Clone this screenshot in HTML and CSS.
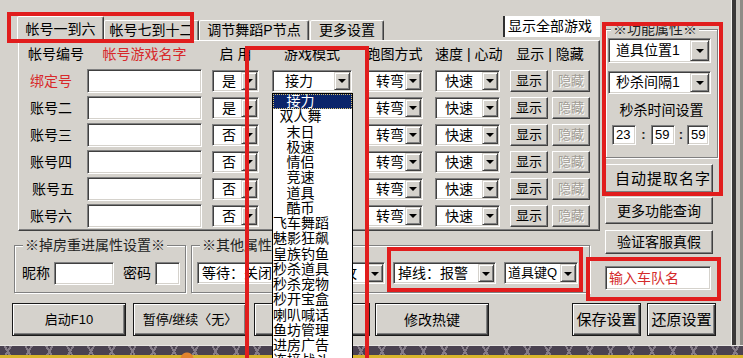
FILE: index.html
```html
<!DOCTYPE html>
<html lang="zh-CN">
<head>
<meta charset="utf-8">
<title>帐号设置</title>
<link rel="stylesheet" href="styles.css">
</head>
<body>
<div class="window">
  <div class="main">
    <div class="content">
      <div class="upper">
        <div class="left">
          <div class="tabs">
            <div class="tab active">帐号一到六</div>
            <div class="tab t2">帐号七到十二</div>
            <div class="tab t3">调节舞蹈P节点</div>
            <div class="tab t4">更多设置</div>
            <div class="showall">显示全部游戏</div>
          </div>
          <div class="panel">
            <div class="row head">
              <div class="c-label hl">帐号编号</div>
              <div class="c-name red">帐号游戏名字</div>
              <div class="c-en">启 用</div>
              <div class="c-mode">游戏模式</div>
              <div class="c-run">跑图方式</div>
              <div class="c-speed">速度 | 心动</div>
              <div class="c-sh">显示 | 隐藏</div>
            </div>
            <div class="row">
              <div class="c-label red">绑定号</div>
              <div class="c-name field"></div>
              <div class="c-en combo"><span class="cv">是</span><i class="cb"></i></div>
              <div class="c-mode combo"><span class="cv">接力</span><i class="cb"></i></div>
              <div class="c-run combo"><span class="cv">转弯</span><i class="cb"></i></div>
              <div class="c-speed combo"><span class="cv">快速</span><i class="cb"></i></div>
              <div class="c-show btn">显示</div>
              <div class="c-hide btn off">隐藏</div>
            </div>
            <div class="row">
              <div class="c-label">账号二</div>
              <div class="c-name field"></div>
              <div class="c-en combo"><span class="cv">是</span><i class="cb"></i></div>
              <div class="c-mode combo"><span class="cv">接力</span><i class="cb"></i></div>
              <div class="c-run combo"><span class="cv">转弯</span><i class="cb"></i></div>
              <div class="c-speed combo"><span class="cv">快速</span><i class="cb"></i></div>
              <div class="c-show btn">显示</div>
              <div class="c-hide btn off">隐藏</div>
            </div>
            <div class="row">
              <div class="c-label">账号三</div>
              <div class="c-name field"></div>
              <div class="c-en combo"><span class="cv">否</span><i class="cb"></i></div>
              <div class="c-mode combo"><span class="cv">接力</span><i class="cb"></i></div>
              <div class="c-run combo"><span class="cv">转弯</span><i class="cb"></i></div>
              <div class="c-speed combo"><span class="cv">快速</span><i class="cb"></i></div>
              <div class="c-show btn">显示</div>
              <div class="c-hide btn off">隐藏</div>
            </div>
            <div class="row">
              <div class="c-label">账号四</div>
              <div class="c-name field"></div>
              <div class="c-en combo"><span class="cv">否</span><i class="cb"></i></div>
              <div class="c-mode combo"><span class="cv">接力</span><i class="cb"></i></div>
              <div class="c-run combo"><span class="cv">转弯</span><i class="cb"></i></div>
              <div class="c-speed combo"><span class="cv">快速</span><i class="cb"></i></div>
              <div class="c-show btn">显示</div>
              <div class="c-hide btn off">隐藏</div>
            </div>
            <div class="row">
              <div class="c-label l5">账号五</div>
              <div class="c-name field"></div>
              <div class="c-en combo"><span class="cv">否</span><i class="cb"></i></div>
              <div class="c-mode combo"><span class="cv">接力</span><i class="cb"></i></div>
              <div class="c-run combo"><span class="cv">转弯</span><i class="cb"></i></div>
              <div class="c-speed combo"><span class="cv">快速</span><i class="cb"></i></div>
              <div class="c-show btn">显示</div>
              <div class="c-hide btn off">隐藏</div>
            </div>
            <div class="row">
              <div class="c-label">账号六</div>
              <div class="c-name field"></div>
              <div class="c-en combo"><span class="cv">否</span><i class="cb"></i></div>
              <div class="c-mode combo"><span class="cv">接力</span><i class="cb"></i></div>
              <div class="c-run combo"><span class="cv">转弯</span><i class="cb"></i></div>
              <div class="c-speed combo"><span class="cv">快速</span><i class="cb"></i></div>
              <div class="c-show btn">显示</div>
              <div class="c-hide btn off">隐藏</div>
            </div>
          </div>
          <div class="groups">
            <div class="gbox g1">
              <div class="gtitle"><span>※掉房重进属性设置※</span></div>
              <div class="grow">
                <span class="lbl">昵称</span>
                <div class="field nick"></div>
                <span class="lbl pw">密码</span>
                <div class="field pwd"></div>
              </div>
            </div>
            <div class="gbox g2">
              <div class="gtitle"><span>※其他属性设置※</span></div>
              <div class="grow">
                <div class="combo wait"><span class="cv">等待：关闭</span><i class="cb"></i></div>
                <div class="combo atk"><span class="cv">自动反攻</span><i class="cb"></i></div>
                <div class="combo drop"><span class="cv">掉线：报警</span><i class="cb"></i></div>
                <div class="combo key"><span class="cv">道具键Q</span><i class="cb"></i></div>
              </div>
            </div>
          </div>
        </div>
        <div class="right">
          <div class="gbox g3">
            <div class="gtitle"><span>※功能属性※</span></div>
            <div class="combo big c1"><span class="cv">道具位置1</span><i class="cb"></i></div>
            <div class="combo big c2"><span class="cv">秒杀间隔1</span><i class="cb"></i></div>
            <div class="timelbl">秒杀时间设置</div>
            <div class="timerow">
              <div class="field tf">23</div>
              <span class="colon c-a">:</span>
              <div class="field tf">59</div>
              <span class="colon c-b">:</span>
              <div class="field tf tlast">59</div>
            </div>
          </div>
          <div class="btn auto">自动提取名字</div>
          <div class="btn more">更多功能查询</div>
          <div class="btn verify">验证客服真假</div>
          <div class="field team">输入车队名</div>
        </div>
      </div>
      <div class="btnrow">
        <div class="btn dflt b1">启动F10</div>
        <div class="btn dflt b2">暂停/继续〈无〉</div>
        <div class="btn dflt b3">喊话设置</div>
        <div class="btn dflt b4">修改热键</div>
        <div class="btn dflt b5">保存设置</div>
        <div class="btn dflt b6">还原设置</div>
      </div>
    </div>
    <div class="frame"></div>
  </div>
  <div class="band"></div>

  <ul class="droplist">
    <li class="sel">接力</li>
    <li>双人舞</li>
    <li>末日</li>
    <li>极速</li>
    <li>情侣</li>
    <li>竞速</li>
    <li>道具</li>
    <li>酷币</li>
    <li>飞车舞蹈</li>
    <li>魅影狂飙</li>
    <li>皇族钓鱼</li>
    <li>秒杀道具</li>
    <li>秒杀宠物</li>
    <li>秒开宝盒</li>
    <li>喇叭喊话</li>
    <li>鱼坊管理</li>
    <li>进房广告</li>
    <li>连接战斗</li>
  </ul>

  <div class="mark m1"></div>
  <div class="mark m2"></div>
  <div class="mark m3"></div>
  <div class="mark m4"></div>
  <div class="mark m5"></div>
</div>
</body>
</html>
```

FILE: styles.css
```css
* { box-sizing: border-box; margin: 0; padding: 0; }

body {
  width: 743px;
  height: 358px;
  overflow: hidden;
  background: #d5d2cc;
  font-family: "Liberation Sans", "Noto Sans CJK SC", sans-serif;
  font-size: 14px;
  line-height: 16px;
  color: #000;
}

.window { position: relative; width: 743px; height: 358px; overflow: hidden; }
.main { display: flex; height: 345px; }
.content { width: 731px; display: flex; flex-direction: column; }
.frame {
  width: 12px;
  background: linear-gradient(to right, #f2f1ee 0 1px, #3a3838 1px 5px, #c9c6c0 5px 9px, #8e8b86 9px 12px);
}
.upper { display: flex; height: 293px; }
.left { width: 600px; }
.right { width: 131px; padding-left: 5px; display: flex; flex-direction: column; align-items: flex-start; }

/* ---------- classic controls ---------- */
.field {
  background: #fff;
  border: 1px solid;
  border-color: #808080 #fff #fff #808080;
  box-shadow: inset 1px 1px 0 #404040, inset -1px -1px 0 #d5d2cc;
}
.combo {
  display: flex;
  height: 22px;
  background: #fff;
  border: 1px solid;
  border-color: #808080 #fff #fff #808080;
  box-shadow: inset 1px 1px 0 #404040, inset -1px -1px 0 #d5d2cc;
  padding: 1px;
}
.cv { flex: 1; padding-left: 8px; line-height: 18px; white-space: nowrap; overflow: hidden; }
.cb {
  width: 16px;
  flex: none;
  background: #d5d2cc;
  border: 1px solid;
  border-color: #d5d2cc #404040 #404040 #d5d2cc;
  box-shadow: inset 1px 1px 0 #fff, inset -1px -1px 0 #808080;
  display: flex;
  align-items: center;
  justify-content: center;
}
.cb::after {
  content: "";
  border-left: 4px solid transparent;
  border-right: 4px solid transparent;
  border-top: 4px solid #000;
  margin-top: 1px;
}
.btn {
  background: #d5d2cc;
  border: 1px solid;
  border-color: #fff #404040 #404040 #fff;
  box-shadow: inset -1px -1px 0 #808080;
  display: flex;
  align-items: center;
  justify-content: center;
  white-space: nowrap;
}
.btn.dflt {
  border-color: #1a1a1a;
  box-shadow: inset 1px 1px 0 #fff, inset -1px -1px 0 #404040, inset -2px -2px 0 #808080;
}
.btn.off { color: #a19d95; text-shadow: 1px 1px 0 #fff; }
.red { color: #d8282a; }

/* ---------- tabs ---------- */
.tabs {
  display: flex;
  align-items: flex-end;
  height: 40px;
  padding-left: 17px;
  position: relative;
  z-index: 2;
}
.tab {
  height: 20px;
  line-height: 19px;
  text-align: center;
  white-space: nowrap;
  background: #d5d2cc;
  border: 1px solid;
  border-bottom: none;
  border-color: #fff #404040 transparent #fff;
  box-shadow: inset -1px 0 0 #808080;
  border-radius: 2px 2px 0 0;
}
.tab.active { width: 87px; height: 25px; line-height: 24px; margin-bottom: -1px; }
.tab.t2 { width: 95px; }
.tab.t3 { width: 110px; }
.tab.t4 { width: 74px; margin-left: 1px; }
.showall {
  align-self: flex-start;
  margin-top: 16px;
  margin-left: auto;
  width: 97px;
  height: 21px;
  background: #fff;
  border-left: 2px solid #303030;
  padding-left: 3px;
  line-height: 21px;
  white-space: nowrap;
}

/* ---------- account panel ---------- */
.panel {
  position: relative;
  z-index: 1;
  margin-left: 18px;
  width: 582px;
  height: 191px;
  border: 1px solid;
  border-color: #fff #404040 #404040 #fff;
  box-shadow: inset -1px -1px 0 #808080;
}
.row { display: flex; align-items: center; height: 27px; }
.row.head { height: 26px; line-height: 26px; }
.head > div { text-align: center; white-space: nowrap; }
.head .hl { padding-left: 6px; padding-right: 0; }
.c-label { width: 68px; text-align: center; padding-right: 4px; line-height: 20px; }
.c-label.l5 { padding-right: 0; }
.c-name { width: 115px; }
.row .c-name.field { height: 24px; }
.c-en { width: 47px; margin-left: 10px; }
.c-mode { width: 80px; margin-left: 13px; }
.c-mode .cv { padding-left: 11px; }
.c-run { width: 57px; margin-left: 14px; }
.c-speed { width: 65px; margin-left: 12px; }
.c-show { width: 38px; margin-left: 10px; height: 22px; font-size: 13px; }
.c-hide { width: 38px; margin-left: 4px; height: 22px; font-size: 13px; }
.c-sh { width: 80px; margin-left: 10px; }

/* ---------- group boxes ---------- */
.groups { display: flex; margin-top: 14px; }
.gbox { border: 1px solid #808080; box-shadow: inset 1px 1px 0 #fff, 1px 1px 0 #fff; }
.gtitle { margin-top: -9px; height: 16px; line-height: 16px; padding-left: 8px; white-space: nowrap; color: #222; }
.gtitle span { background: #d5d2cc; padding: 0 2px; }
.g1 { margin-left: 14px; width: 172px; height: 48px; }
.g2 { margin-left: 5px; width: 399px; height: 48px; }
.grow { display: flex; align-items: center; margin-top: 9px; }
.g1 .grow { padding-left: 7px; }
.lbl { line-height: 23px; white-space: nowrap; }
.nick { margin-left: 4px; width: 60px; height: 23px; }
.lbl.pw { margin-left: 9px; }
.pwd { margin-left: 4px; width: 25px; height: 23px; }
.g2 .cv { padding-left: 3px; }
.wait { margin-left: 5px; width: 93px; }
.atk { margin-left: 6px; width: 89px; }
.drop { margin-left: 8px; width: 103px; }
.key { margin-left: 8px; width: 74px; }
.key .cv { padding-left: 2px; font-size: 13px; }

/* ---------- right column ---------- */
.g3 { margin-top: 29px; width: 113px; height: 129px; }
.g3 .gtitle { padding-left: 5px; }
.combo.big { height: 25px; margin-left: 2px; width: 103px; }
.combo.big .cb { width: 19px; }
.combo.big .cv { padding-left: 6px; line-height: 21px; }
.g3 .c1 { margin-top: 1px; }
.g3 .c2 { margin-top: 8px; height: 23px; }
.g3 .c2 .cv { line-height: 19px; }
.timelbl { margin-top: 7px; height: 18px; line-height: 18px; text-align: center; }
.timerow { display: flex; align-items: center; margin-top: 6px; margin-left: 6px; height: 20px; }
.tf { width: 24px; height: 20px; font-size: 13px; line-height: 18px; padding-left: 3px; }
.tf.tlast { width: 22px; }
.colon { font-size: 13px; font-weight: bold; text-align: center; line-height: 18px; color: #222; }
.c-a { width: 15px; }
.c-b { width: 12px; }
.auto { margin-top: 6px; width: 108px; height: 29px; font-size: 15px; letter-spacing: 1px; padding-left: 8px; }
.more { margin-top: 4px; width: 108px; height: 27px; }
.verify { margin-top: 6px; width: 108px; height: 24px; }
.team { margin-top: 12px; width: 106px; height: 24px; color: #d42a2a; line-height: 22px; padding-left: 3px; }

/* ---------- bottom buttons ---------- */
.btnrow { display: flex; margin-top: 10px; height: 33px; }
.b1 { margin-left: 12px; width: 114px; font-size: 13px; }
.b2 { margin-left: 7px; width: 114px; font-size: 13px; }
.b3 { margin-left: 7px; width: 116px; }
.b4 { margin-left: 5px; width: 114px; }
.b5 { margin-left: 83px; width: 69px; font-size: 15px; }
.b6 { margin-left: 6px; width: 69px; font-size: 15px; }

/* ---------- decorative strip ---------- */
.band {
  height: 13px;
  border-top: 1px solid #e8e6e2;
  background:
    radial-gradient(circle at 187px 13px, #e2832e 0 6px, transparent 7px),
    linear-gradient(#d9b52c, #d9b52c) left bottom / 100% 3px no-repeat,
    repeating-linear-gradient(60deg, transparent 0 9px, #857c88 9px 11px, transparent 11px 18px),
    repeating-linear-gradient(-60deg, transparent 0 9px, #857c88 9px 11px, transparent 11px 18px),
    #4a4250;
}

/* ---------- open dropdown list ---------- */
.droplist {
  position: absolute;
  left: 272px;
  top: 93px;
  width: 81px;
  height: 280px;
  background: #fff;
  border: 1px solid #000;
  list-style: none;
  z-index: 5;
}
.droplist li {
  height: 15.25px;
  line-height: 15px;
  text-align: center;
  padding-right: 24px;
  white-space: nowrap;
}
.droplist li.sel {
  background: #0a246a;
  color: #fff;
  outline: 1px dotted #d8c070;
  outline-offset: -1px;
}

/* ---------- red annotation frames ---------- */
.mark { position: absolute; border: 4px solid #e11d1d; z-index: 6; }
.m1 { left: 7px; top: 12px; width: 187px; height: 31px; }
.m2 { left: 245px; top: 46px; width: 124px; height: 340px; }
.m3 { left: 602px; top: 22px; width: 121px; height: 174px; }
.m4 { left: 586px; top: 257px; width: 135px; height: 44px; }
.m5 { left: 387px; top: 247px; width: 196px; height: 45px; }
```
